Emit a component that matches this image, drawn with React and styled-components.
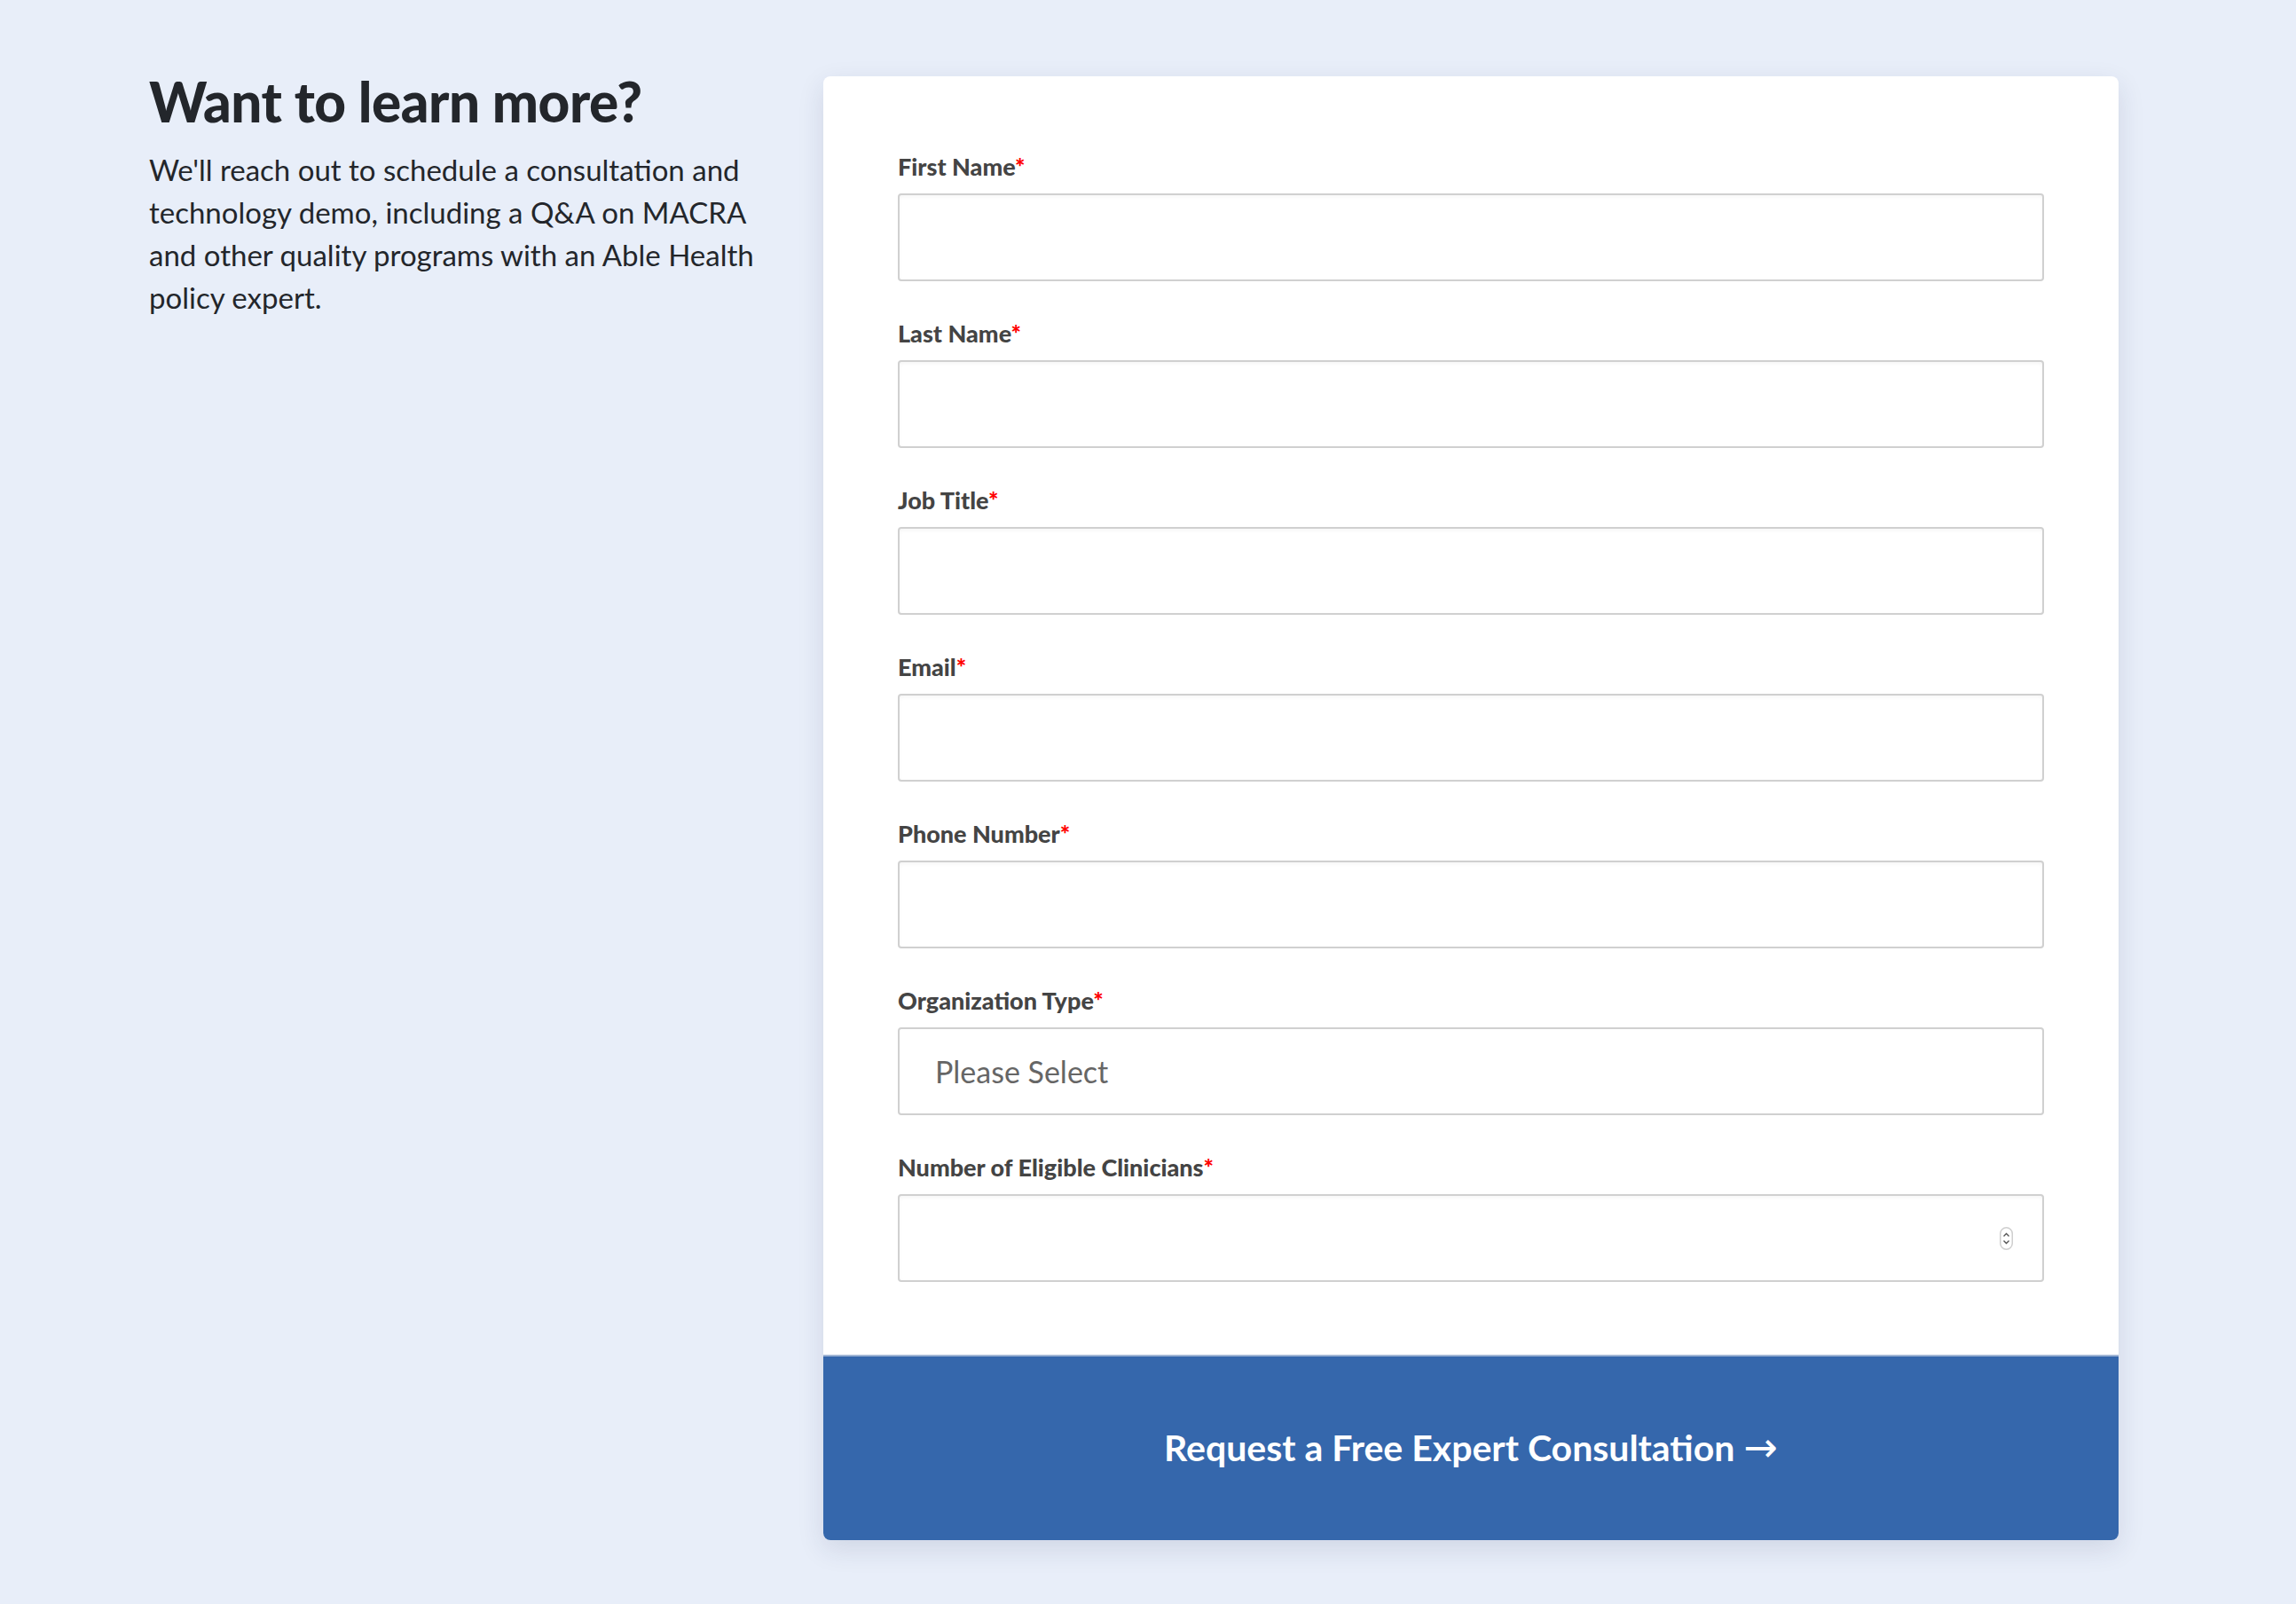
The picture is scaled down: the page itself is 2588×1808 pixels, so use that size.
import React from 'react';
import styled, { createGlobalStyle } from 'styled-components';

const GlobalStyle = createGlobalStyle`
  html, body {
    margin: 0;
    padding: 0;
    background: #e8eef9;
  }
  body {
    font-family: Lato, "Open Sans", sans-serif;
    color: #23262b;
  }
`;

const fields = [
    { id: 'firstname', label: 'First Name' },
    { id: 'lastname', label: 'Last Name' },
    { id: 'jobtitle', label: 'Job Title' },
    { id: 'email', label: 'Email', type: 'email' },
    { id: 'phone', label: 'Phone Number', type: 'tel' },
    { id: 'orgtype', label: 'Organization Type', kind: 'select' },
    { id: 'clinicians', label: 'Number of Eligible Clinicians', kind: 'number' },
];

const Spinner = () => (
    <SpinBox>
        <svg width="15" height="26" viewBox="0 0 15 26">
            <rect x="0.75" y="0.75" width="13.5" height="24.5" rx="6.75" fill="#fff" stroke="#cfcfcf" strokeWidth="1.5" />
            <path d="M4.5 10.5 L7.5 7.5 L10.5 10.5" fill="none" stroke="#555" strokeWidth="1.4" />
            <path d="M4.5 15.5 L7.5 18.5 L10.5 15.5" fill="none" stroke="#555" strokeWidth="1.4" />
        </svg>
    </SpinBox>
);

const Field = ({ field }) => (
    <FieldRow>
        <Label htmlFor={field.id}>
            {field.label}<Required>*</Required>
        </Label>
        {field.kind === 'select' && (
            <Select id={field.id} defaultValue="">
                <option value="" disabled>Please Select</option>
                <option>Physician Practice</option>
                <option>Health System</option>
                <option>ACO</option>
            </Select>
        )}
        {field.kind === 'number' && (
            <NumberWrap>
                <TextInput id={field.id} type="number" />
                <Spinner />
            </NumberWrap>
        )}
        {!field.kind && <TextInput id={field.id} type={field.type || 'text'} />}
    </FieldRow>
);

const App = () => (
    <Page>
        <GlobalStyle />
        <Intro>
            <Heading>Want to learn more?</Heading>
            <Blurb>
                We'll reach out to schedule a consultation and technology demo,
                including a Q&amp;A on MACRA and other quality programs with an
                Able Health policy expert.
            </Blurb>
        </Intro>
        <Card>
            <Form>
                {fields.map(f => <Field key={f.id} field={f} />)}
            </Form>
            <Submit type="button">
                Request a Free Expert Consultation <Arrow>&rarr;</Arrow>
            </Submit>
        </Card>
    </Page>
);

export default App;

const Page = styled.div`
    display: grid;
    grid-template-columns: 720px 1460px;
    column-gap: 40px;
    align-items: start;
    padding: 86px 0 72px 168px;
    min-height: 1808px;
    box-sizing: border-box;
`;

const Intro = styled.div`
    display: flex;
    flex-direction: column;
`;

const Heading = styled.h2`
    margin: -5px 0 0;
    font-size: 62px;
    line-height: 66px;
    font-weight: 900;
    letter-spacing: -0.5px;
    color: #23262b;
`;

const Blurb = styled.p`
    margin: 20px 0 0;
    font-size: 33px;
    line-height: 48px;
    color: #23262b;
`;

const Card = styled.div`
    display: flex;
    flex-direction: column;
    background: #fff;
    border-radius: 8px;
    box-shadow: 0 10px 30px rgba(30, 45, 80, 0.12);
    overflow: hidden;
`;

const Form = styled.form`
    display: flex;
    flex-direction: column;
    padding: 85px 84px 40px;
`;

const FieldRow = styled.div`
    display: flex;
    flex-direction: column;
    margin-bottom: 42px;
`;

const Label = styled.label`
    font-size: 27px;
    line-height: 34px;
    font-weight: 900;
    color: #444;
    margin-bottom: 13px;
`;

const Required = styled.span`
    color: #ff0000;
`;

const TextInput = styled.input`
    box-sizing: border-box;
    width: 100%;
    height: 99px;
    padding: 0 40px;
    border: 2px solid #d0d0d0;
    border-radius: 4px;
    box-shadow: inset 0 2px 4px rgba(0, 0, 0, 0.04);
    background: #fff;
    font-family: inherit;
    font-size: 33px;
    color: #333;
    outline: none;
    -moz-appearance: textfield;

    &::-webkit-inner-spin-button,
    &::-webkit-outer-spin-button {
        -webkit-appearance: none;
        margin: 0;
    }
`;

const Select = styled.select`
    box-sizing: border-box;
    width: 100%;
    height: 99px;
    padding: 0 40px;
    border: 2px solid #d0d0d0;
    border-radius: 4px;
    background: #fff;
    appearance: none;
    -webkit-appearance: none;
    font-family: inherit;
    font-size: 34px;
    color: #666;
    outline: none;
`;

const NumberWrap = styled.div`
    position: relative;
`;

const SpinBox = styled.div`
    position: absolute;
    right: 35px;
    top: 50%;
    transform: translateY(-50%);
    display: flex;
    pointer-events: none;
`;

const Submit = styled.button`
    height: 209px;
    border: none;
    border-top: 2px solid #9fb5d4;
    background: #3567ac;
    color: #fff;
    font-family: inherit;
    font-size: 41px;
    font-weight: 700;
    padding-bottom: 4px;
    cursor: pointer;
`;

const Arrow = styled.span`
    font-family: "DejaVu Sans", sans-serif;
    font-weight: 400;
    font-size: 46px;
`;
